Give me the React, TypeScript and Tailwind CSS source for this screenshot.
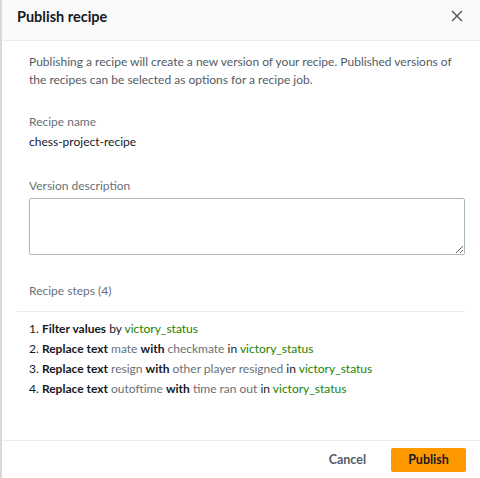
import React from "react";

const font = { fontFamily: 'Lato, "Noto Sans", Arial, sans-serif' };

type Part = { t: string; k: "b" | "n" | "v" | "c" };

const steps: Part[][] = [
  [
    { t: "Filter values", k: "b" },
    { t: "by", k: "n" },
    { t: "victory_status", k: "c" },
  ],
  [
    { t: "Replace text", k: "b" },
    { t: "mate", k: "v" },
    { t: "with", k: "b" },
    { t: "checkmate", k: "v" },
    { t: "in", k: "n" },
    { t: "victory_status", k: "c" },
  ],
  [
    { t: "Replace text", k: "b" },
    { t: "resign", k: "v" },
    { t: "with", k: "b" },
    { t: "other player resigned", k: "v" },
    { t: "in", k: "n" },
    { t: "victory_status", k: "c" },
  ],
  [
    { t: "Replace text", k: "b" },
    { t: "outoftime", k: "v" },
    { t: "with", k: "b" },
    { t: "time ran out", k: "v" },
    { t: "in", k: "n" },
    { t: "victory_status", k: "c" },
  ],
];

function partClass(k: Part["k"]) {
  if (k === "b") return "font-bold text-[#16191f]";
  if (k === "v") return "text-[#687078]";
  if (k === "c") return "text-[#1d8102]";
  return "text-[#16191f]";
}

export default function App() {
  return (
    <div
      className="w-[480px] h-[478px] bg-white border-l-2 border-[#d5dbdb] flex flex-col overflow-hidden"
      style={font}
    >
      <div className="h-[41px] bg-[#fafafa] border-b border-[#eaeded] flex items-center justify-between pl-[15px] pr-[16px] shrink-0">
        <h2 className="text-[14.5px] font-bold text-[#16191f] leading-none -mt-[5px]">Publish recipe</h2>
        <svg width="14" height="14" viewBox="0 0 14 14" className="text-[#545b64] -mt-[9px]">
          <path d="M2 2 L12 12 M12 2 L2 12" stroke="currentColor" strokeWidth="1.5" fill="none" />
        </svg>
      </div>

      <div className="flex-1 pt-[12px] pl-[27px] pr-[14px]">
        <p className="text-[12px] leading-[18px] text-[#545b64] whitespace-nowrap">
          Publishing a recipe will create a new version of your recipe. Published versions of
          <br />
          the recipes can be selected as options for a recipe job.
        </p>

        <div className="mt-[24px]">
          <div className="text-[12px] leading-[18px] text-[#687078]">Recipe name</div>
          <div className="text-[12px] leading-[18px] text-[#16191f] mt-[2px]">chess-project-recipe</div>
        </div>

        <div className="mt-[26px]">
          <div className="text-[12px] leading-[18px] text-[#687078]">Version description</div>
          <textarea className="mt-[3px] block w-[436px] h-[57px] border border-[#aab7b8] rounded-[2px] resize-y" />
        </div>

        <div className="mt-[27px] -ml-[12px]">
          <div className="pl-[12px] text-[12px] leading-[18px] text-[#687078]">Recipe steps (4)</div>
          <div className="mt-[11px] border-t border-[#eaeded] w-[448px]" />
          <ol className="pl-[12px] mt-[7px] flex flex-col">
            {steps.map((s, i) => (
              <li key={i} className="text-[12px] leading-[20px] text-[#16191f]">
                {i + 1}.{" "}
                {s.map((p, j) => (
                  <React.Fragment key={j}>
                    <span className={partClass(p.k)}>{p.t}</span>
                    {j < s.length - 1 ? " " : ""}
                  </React.Fragment>
                ))}
              </li>
            ))}
          </ol>
        </div>
      </div>

      <div className="h-[38px] border-t border-[#eaeded] flex items-start justify-end pr-[14px] pt-[7px] gap-[25px] shrink-0">
        <button className="text-[12.5px] font-bold text-[#545b64] h-[24px] leading-[24px]">Cancel</button>
        <button className="bg-[#ff9900] rounded-[2px] w-[75px] h-[24px] text-[12.5px] font-bold text-[#16191f]">
          Publish
        </button>
      </div>
    </div>
  );
}
